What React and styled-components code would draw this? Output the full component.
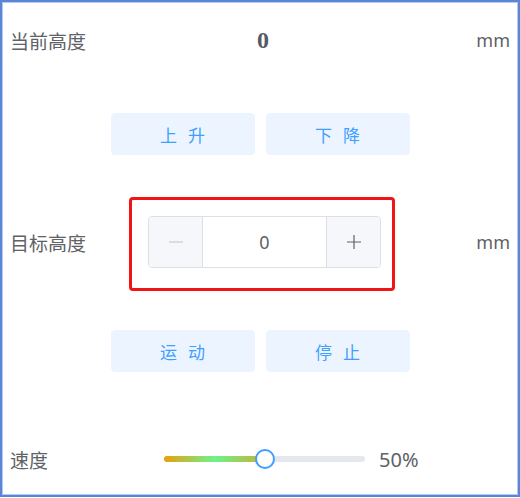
import React from "react";
import styled, { createGlobalStyle } from "styled-components";

const GlobalStyle = createGlobalStyle`
  html, body {
    margin: 0;
    padding: 0;
    background: #ffffff;
  }
  body {
    font-family: "Noto Sans", "Noto Sans CJK SC", sans-serif;
  }
`;

const Panel = styled.div`
  box-sizing: border-box;
  width: 520px;
  height: 497px;
  border: 2px solid #5a86d8;
  box-shadow: inset 0 0 0 1px #b4caf0;
  padding: 0 8px;
  display: flex;
  flex-direction: column;
`;

const Row = styled.div`
  display: grid;
  grid-template-columns: 120px 266px 1fr;
  align-items: center;
  height: ${(p) => p.height}px;
  margin-top: ${(p) => p.top || 0}px;
`;

const Label = styled.span`
  font-family: "Noto Sans CJK SC", "Noto Sans", sans-serif;
  font-size: 19px;
  color: #606266;
  margin-bottom: ${(p) => p.lift || 0}px;
`;

const Unit = styled.span`
  justify-self: end;
  font-size: 18px;
  color: #606266;
  margin-bottom: ${(p) => p.lift || 0}px;
`;

const Value = styled.span`
  justify-self: center;
  font-family: "Liberation Serif", serif;
  font-weight: bold;
  font-size: 24px;
  color: #555a60;
`;

const ButtonRow = styled.div`
  display: flex;
  justify-content: center;
  gap: 11px;
  margin-top: ${(p) => p.top}px;
`;

const Button = styled.button`
  width: 144px;
  height: 42px;
  border: 1px solid #ecf5ff;
  border-radius: 4px;
  background: #ecf5ff;
  color: #409eff;
  font-family: "Noto Sans CJK SC", sans-serif;
  font-size: 17px;
  letter-spacing: 11px;
  padding: 0 0 0 11px;
  cursor: pointer;
`;

const Highlight = styled.div`
  box-sizing: border-box;
  width: 266px;
  height: 94px;
  margin-left: -1px;
  border: 3px solid #f01414;
  border-radius: 4px;
  padding: 16px 11px 0 16px;
`;

const NumberInput = styled.div`
  display: flex;
  height: 52px;
  border: 1px solid #dcdfe6;
  border-radius: 4px;
  box-sizing: border-box;
  overflow: hidden;
  background: #ffffff;
`;

const Step = styled.div`
  width: 53px;
  display: flex;
  align-items: center;
  justify-content: center;
  background: #f5f7fa;
  border-${(p) => (p.side === "left" ? "right" : "left")}: 1px solid #dcdfe6;
  color: ${(p) => (p.disabled ? "#c0c4cc" : "#606266")};
`;

const InputValue = styled.div`
  flex: 1;
  display: flex;
  align-items: center;
  justify-content: center;
  font-size: 18px;
  color: #606266;
`;

const SpeedRow = styled.div`
  display: flex;
  align-items: center;
  height: 40px;
  margin-top: 67px;
`;

const SpeedLabel = styled(Label)`
  width: 154px;
`;

const Track = styled.div`
  position: relative;
  width: 201px;
  height: 6px;
  border-radius: 3px;
  background: #e4e7ed;
`;

const Fill = styled.div`
  height: 100%;
  border-radius: 3px;
  background: linear-gradient(90deg, #e8a00c 0%, #6ef28c 50%, #c7b134 100%);
`;

const Thumb = styled.div`
  position: absolute;
  top: 50%;
  width: 20px;
  height: 20px;
  box-sizing: border-box;
  border: 2px solid #409eff;
  border-radius: 50%;
  background: #ffffff;
  transform: translate(-50%, -50%);
`;

const Percent = styled.span`
  margin-left: 14px;
  font-size: 20px;
  color: #606266;
`;

const Minus = () => (
  <svg width="16" height="16" viewBox="0 0 16 16">
    <path d="M1 8h14" stroke="currentColor" strokeWidth="1.2" />
  </svg>
);

const Plus = () => (
  <svg width="16" height="16" viewBox="0 0 16 16">
    <path d="M1 8h14M8 1v14" stroke="currentColor" strokeWidth="1.2" />
  </svg>
);

export default function App() {
  const speed = 50;
  return (
    <>
      <GlobalStyle />
      <Panel>
        <Row height={76}>
          <Label>当前高度</Label>
          <Value>0</Value>
          <Unit>mm</Unit>
        </Row>

        <ButtonRow top={35}>
          <Button>上升</Button>
          <Button>下降</Button>
        </ButtonRow>

        <Row height={94} top={42}>
          <Label lift={4}>目标高度</Label>
          <Highlight>
            <NumberInput>
              <Step side="left" disabled>
                <Minus />
              </Step>
              <InputValue>0</InputValue>
              <Step side="right">
                <Plus />
              </Step>
            </NumberInput>
          </Highlight>
          <Unit lift={4}>mm</Unit>
        </Row>

        <ButtonRow top={39}>
          <Button>运动</Button>
          <Button>停止</Button>
        </ButtonRow>

        <SpeedRow>
          <SpeedLabel>速度</SpeedLabel>
          <Track>
            <Fill style={{ width: `${speed}%` }} />
            <Thumb style={{ left: `${speed}%` }} />
          </Track>
          <Percent>{speed}%</Percent>
        </SpeedRow>
      </Panel>
    </>
  );
}
